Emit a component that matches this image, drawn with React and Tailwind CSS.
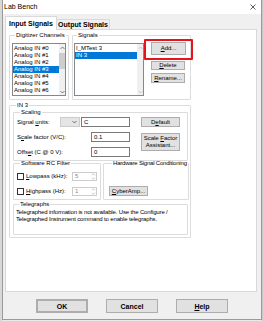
import React from 'react';

const U = ({ children }) => <span className="underline underline-offset-1">{children}</span>;

function Btn({ children, className = '' }) {
  return (
    <div className={`flex items-center justify-center bg-[#e1e1e1] border border-[#adadad] text-[6px] leading-[7px] text-black text-center ${className}`}>
      <span className="whitespace-nowrap">{children}</span>
    </div>
  );
}

function Group({ label, className = '', children, legendClass = '' }) {
  return (
    <fieldset className={`border border-[#dcdcdc] rounded-[1px] ${className}`}>
      <legend className={`px-[1px] ml-[3px] text-[6px] leading-[7px] text-black whitespace-nowrap ${legendClass}`}>{label}</legend>
      {children}
    </fieldset>
  );
}

function Chevron({ up, color = '#606060' }) {
  return (
    <svg width="5" height="4" viewBox="0 0 5 4">
      <path d={up ? 'M0.5 3 L2.5 1 L4.5 3' : 'M0.5 1 L2.5 3 L4.5 1'} fill="none" stroke={color} strokeWidth="0.8" />
    </svg>
  );
}

function ScrollBar({ thumb, disabled }) {
  const c = disabled ? '#bfbfbf' : '#606060';
  return (
    <div className="w-[6px] flex flex-col items-center bg-[#f0f0f0] h-full">
      <div className="h-[7px] flex items-center"><Chevron up color={c} /></div>
      <div className="flex-1 w-full">
        {thumb && <div className="mt-[2px] h-[16px] w-full bg-[#cdcdcd]" />}
      </div>
      <div className="h-[7px] flex items-center"><Chevron color={c} /></div>
    </div>
  );
}

function Spin({ value }) {
  return (
    <div className="flex w-[25px] h-[9px] border border-[#cccccc] bg-white">
      <div className="flex-1 pl-[2px] text-[6px] leading-[7px] text-[#8a8a8a]">{value}</div>
      <div className="w-[5px] flex flex-col items-center justify-center gap-[1px]">
        <Chevron up color="#9a9a9a" />
        <Chevron color="#9a9a9a" />
      </div>
    </div>
  );
}

export default function App() {
  const channels = ['Analog IN #0', 'Analog IN #1', 'Analog IN #2', 'Analog IN #3', 'Analog IN #4', 'Analog IN #5', 'Analog IN #6'];

  return (
    <div className="flex w-[263px] h-[321px] bg-[#e9e9e9] font-['Liberation_Sans',Arial,sans-serif] text-black overflow-hidden">
      <div className="w-[2px] bg-[#d8d8d8]" />

      {/* window */}
      <div className="w-[260px] h-[320px] flex flex-col bg-[#f0f0f0] border-l border-r border-b border-[#9a9a9a]">
        <div className="h-[14px] bg-white flex items-center justify-between pl-[1px] pr-[5px]">
          <span className="text-[7px] leading-[8px]">Lab Bench</span>
          <svg width="6" height="6" viewBox="0 0 6 6">
            <path d="M0.5 0.5 L5.5 5.5 M5.5 0.5 L0.5 5.5" stroke="#333" strokeWidth="0.8" />
          </svg>
        </div>

        {/* tabs */}
        <div className="mt-[2px] ml-[2px] flex items-end h-[14px] -mb-px relative z-10">
          <div className="w-[52px] h-[14px] bg-white border border-b-0 border-[#d9d9d9] flex items-center justify-center text-[7px] font-bold leading-[8px]">
            Input Signals
          </div>
          <div className="w-[53px] h-[11px] bg-[#f0f0f0] border border-l-0 border-[#d9d9d9] flex items-center justify-center text-[7px] font-bold leading-[8px]">
            Output Signals
          </div>
        </div>

        {/* panel */}
        <div className="ml-[2px] w-[252px] h-[263px] bg-white border border-[#d9d9d9] pl-[3px] pt-[2px]">
          <div className="flex gap-[3px]">
            <Group label="Digitizer Channels" className="w-[60px] h-[68px] px-[2px]">
              <div className="mt-[4px] w-[54px] h-[53px] border border-[#828790] flex overflow-hidden">
                <div className="flex-1 pt-[1px]">
                  {channels.map((c, i) => (
                    <div key={c} className={`text-[6px] leading-[7px] pl-[1px] whitespace-nowrap ${i === 3 ? 'bg-[#0078d7] text-white' : ''}`}>
                      {c}
                    </div>
                  ))}
                </div>
                <ScrollBar thumb />
              </div>
            </Group>

            <Group label="Signals" className="w-[119px] h-[68px] pl-[1px]">
              <div className="flex mt-[4px]">
                <div className="w-[70px] h-[53px] border border-[#828790] flex">
                  <div className="flex-1 pt-[1px]">
                    <div className="text-[6px] leading-[7px] pl-[1px]">I_MTest 3</div>
                    <div className="text-[6px] leading-[7px] pl-[1px] bg-[#0078d7] text-white">IN 3</div>
                  </div>
                  <ScrollBar disabled />
                </div>
                <div className="ml-[7px] relative flex flex-col">
                  <Btn className="w-[35px] h-[13px] -mt-[1px]"><U>A</U>dd...</Btn>
                  <Btn className="w-[34px] h-[9px] mt-[6px]"><U>D</U>elete</Btn>
                  <Btn className="w-[34px] h-[10px] mt-[3px]"><U>R</U>ename...</Btn>
                  <div className="absolute -left-[7px] -top-[4px] w-[49px] h-[21px] border-2 border-[#e8141c] rounded-[1px]" />
                </div>
              </div>
            </Group>
          </div>

          <Group label="IN 3" className="mt-[2px] w-[182px] h-[136px] pl-[3px]" legendClass="ml-[2px]">
            <Group label="Scaling" className="w-[175px] h-[52px] pl-[3px]">
              <div className="flex mt-[1px]">
                <div className="w-[114px] flex flex-col gap-[5px] text-[6px] leading-[7px]">
                  <div className="h-[10px] flex items-center">
                    <span className="w-[43px]">Signal <U>u</U>nits:</span>
                    <div className="w-[20px] h-[10px] bg-[#e5e5e5] border border-[#cccccc] flex items-center justify-end pr-[2px]">
                      <Chevron color="#555" />
                    </div>
                    <div className="ml-[1px] w-[49px] h-[10px] border border-[#7a7a7a] pl-[2px] flex items-center">C</div>
                  </div>
                  <div className="h-[10px] flex items-center">
                    <span className="w-[74px]">S<U>c</U>ale factor (V/C):</span>
                    <div className="w-[39px] h-[10px] border border-[#7a7a7a] pl-[2px] flex items-center">0.1</div>
                  </div>
                  <div className="h-[10px] flex items-center">
                    <span className="w-[74px]">Offs<U>e</U>t (C @ 0 V):</span>
                    <div className="w-[39px] h-[10px] border border-[#7a7a7a] pl-[2px] flex items-center">0</div>
                  </div>
                </div>
                <div className="ml-[10px] flex flex-col gap-[6px]">
                  <Btn className="w-[39px] h-[10px]">D<U>e</U>fault</Btn>
                  <Btn className="w-[39px] h-[18px]">Scale <U>F</U>actor<br />Assistant...</Btn>
                </div>
              </div>
            </Group>

            <div className="flex gap-[2px] -mt-[1px]">
              <Group label="Software RC Filter" className="w-[88px] h-[40px] pl-[3px]">
                <div className="flex flex-col gap-[6px] mt-[5px] text-[6px] leading-[7px]">
                  {[['L', 'owpass (kHz):', '5'], ['H', 'ighpass (Hz):', '1']].map(([a, b, v]) => (
                    <div key={a} className="flex items-center h-[9px]">
                      <div className="w-[7px] h-[7px] border border-[#333] bg-white" />
                      <span className="ml-[2px] w-[46px] whitespace-nowrap"><U>{a}</U>{b}</span>
                      <Spin value={v} />
                    </div>
                  ))}
                </div>
              </Group>
              <Group label="Hardware Signal Conditioning" className="w-[85px] h-[40px] pl-[5px]" legendClass="tracking-[-0.2px]">
                <Btn className="mt-[19px] w-[39px] h-[10px]"><U>C</U>yberAmp...</Btn>
              </Group>
            </div>

            <Group label="Telegraphs" className="mt-[1px] w-[175px] h-[34px] pl-[2px]">
              <div className="mt-[1px] text-[6px] leading-[7px] whitespace-nowrap tracking-[-0.15px]">
                Telegraphed information is not available. Use the Configure /<br />
                Telegraphed Instrument command to enable telegraphs.
              </div>
            </Group>
          </Group>
        </div>

        {/* bottom buttons */}
        <div className="flex mt-[7px] ml-[33px] gap-[18px]">
          <Btn className="w-[52px] h-[14px] border-[#0078d7] border-2 font-bold text-[7px]">OK</Btn>
          <Btn className="w-[52px] h-[14px] font-bold text-[7px]">Cancel</Btn>
          <Btn className="w-[52px] h-[14px] font-bold text-[7px]"><U>H</U>elp</Btn>
        </div>
      </div>

      <div className="w-[1px] bg-[#c8c8c8]" />
    </div>
  );
}
